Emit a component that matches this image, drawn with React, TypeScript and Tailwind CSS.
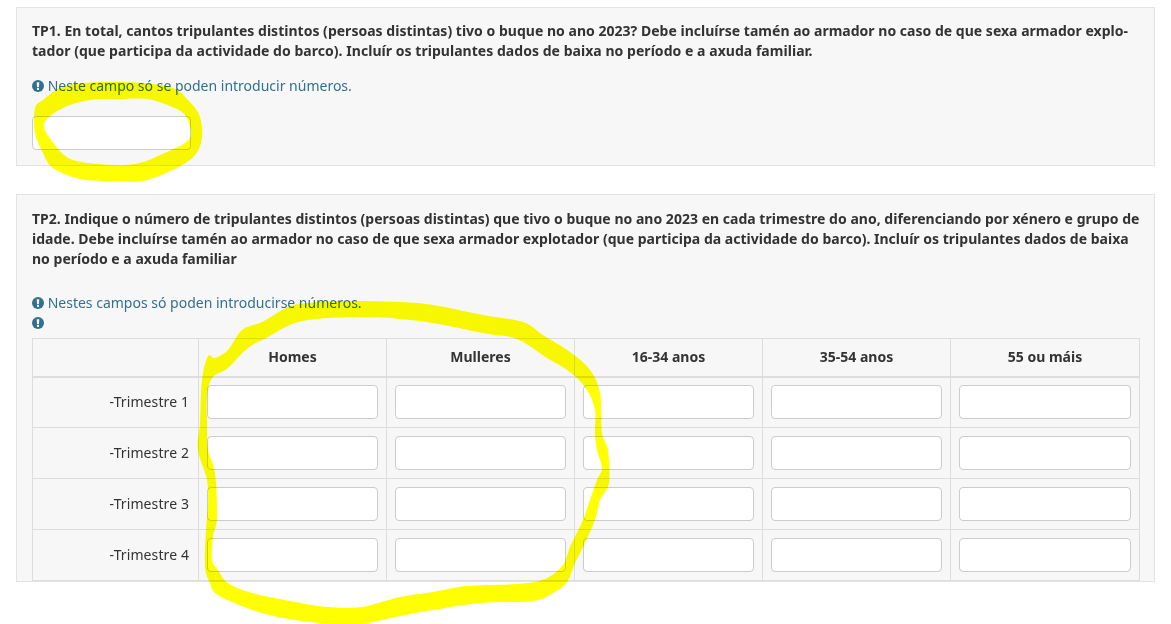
type Pt = [number, number];

const smooth = (p: Pt[]) => {
  const n = p.length;
  let d = `M${p[0][0]} ${p[0][1]}`;
  for (let i = 0; i < n; i++) {
    const a = p[(i - 1 + n) % n];
    const b = p[i];
    const c = p[(i + 1) % n];
    const e = p[(i + 2) % n];
    d += `C${b[0] + (c[0] - a[0]) / 6} ${b[1] + (c[1] - a[1]) / 6} ${c[0] - (e[0] - b[0]) / 6} ${c[1] - (e[1] - b[1]) / 6} ${c[0]} ${c[1]}`;
  }
  return d + "Z";
};

const smallOuter: Pt[] = [[35,108],[43,100],[60,88],[83,83],[113,82],[143,83],[173,88],[188,100],[200,117],[201,143],[187,162],[147,180],[113,181],[80,179],[53,168],[43,153],[35,133]];
const smallInner: Pt[] = [[44,124],[63,108],[90,100],[117,99],[147,99],[170,106],[185,115],[191,133],[185,143],[160,155],[140,163],[113,165],[73,160],[55,145]];
const bigOuter: Pt[] = [[198,450],[200,423],[202,380],[208,356],[215,358],[228,350],[242,330],[262,322],[288,307],[308,303],[345,301],[400,302],[433,305],[483,315],[523,322],[543,335],[570,352],[590,370],[600,393],[602,433],[608,450],[609,483],[600,500],[595,520],[583,547],[575,563],[567,582],[553,593],[533,601],[480,603],[433,610],[400,616],[362,624],[335,624],[295,620],[262,613],[232,602],[215,593],[210,583],[205,567],[206,530],[208,507],[207,480]];
const bigInner: Pt[] = [[208,450],[207,423],[207,397],[212,378],[228,368],[248,348],[268,337],[295,323],[328,318],[375,317],[400,319],[433,323],[483,333],[517,339],[547,358],[570,372],[587,390],[595,410],[595,433],[597,450],[602,468],[597,480],[590,500],[583,520],[570,547],[563,565],[545,579],[517,584],[467,586],[433,592],[400,597],[362,607],[328,607],[295,602],[252,593],[228,583],[218,570],[212,560],[213,537],[217,517],[215,473]];

const Info = () => (
  <svg width="12" height="12" viewBox="0 0 12 12" className="inline-block align-[-1px]">
    <circle cx="6" cy="6" r="6" fill="#31708f" />
    <path d="M4.7 2.2h2.6l-.35 5H5.05z" fill="#f7f7f7" />
    <rect x="5" y="8" width="2" height="2" fill="#f7f7f7" />
  </svg>
);

const columns = ["Homes", "Mulleres", "16-34 anos", "35-54 anos", "55 ou máis"];
const rows = ["-Trimestre 1", "-Trimestre 2", "-Trimestre 3", "-Trimestre 4"];

export default function App() {
  return (
    <div className="relative h-[624px] overflow-hidden bg-white pt-[7px] px-4 text-[14px] leading-[20px] text-[#333333] font-['Noto_Sans','Open_Sans',sans-serif]">
      <div className="h-[159px] border border-[#e3e3e3] bg-[#f7f7f7] pt-[13px] px-[15px]">
        <p className="font-bold whitespace-nowrap">
          <span className="tracking-[0.017px]">TP1. En total, cantos tripulantes distintos (persoas distintas) tivo o buque no ano 2023? Debe incluírse tamén ao armador no caso de que sexa armador explo-</span>
          <br />
          <span className="tracking-[0.04px]">tador (que participa da actividade do barco). Incluír os tripulantes dados de baixa no período e a axuda familiar.</span>
        </p>
        <p className="mt-[15px] text-[#31708f]">
          <Info /> Neste campo só se poden introducir números.
        </p>
        <input className="mt-[20px] block h-[34px] w-[159px] rounded-[4px] border border-[#cccccc] bg-white" />
      </div>
      <div className="mt-[28px] h-[388px] border border-[#e3e3e3] bg-[#f7f7f7] pt-[14px] px-[15px]">
        <p className="font-bold whitespace-nowrap tracking-[0.016px]">
          TP2. Indique o número de tripulantes distintos (persoas distintas) que tivo o buque no ano 2023 en cada trimestre do ano, diferenciando por xénero e grupo de
          <br />
          idade. Debe incluírse tamén ao armador no caso de que sexa armador explotador (que participa da actividade do barco). Incluír os tripulantes dados de baixa
          <br />
          no período e a axuda familiar
        </p>
        <p className="mt-[24px] text-[#31708f]">
          <Info /> Nestes campos só poden introducirse números.
        </p>
        <p className="text-[#31708f] h-[25px]">
          <Info />
        </p>
        <table className="w-[1107px] table-fixed border-collapse">
          <colgroup>
            <col className="w-[166px]" />
            <col className="w-[188px]" />
            <col className="w-[188px]" />
            <col className="w-[188px]" />
            <col className="w-[188px]" />
            <col className="w-[189px]" />
          </colgroup>
          <thead>
            <tr className="h-[38px]">
              <th className="border border-b-2 border-[#dddddd]" />
              {columns.map((c) => (
                <th key={c} className="border border-b-2 border-[#dddddd] text-center font-bold">
                  {c}
                </th>
              ))}
            </tr>
          </thead>
          <tbody>
            {rows.map((r) => (
              <tr key={r} className="h-[51px]">
                <td className="border border-[#dddddd] pr-[9px] text-right tracking-[0.1px]">{r}</td>
                {columns.map((c) => (
                  <td key={c} className="border border-[#dddddd] px-2">
                    <input className="block h-[34px] w-full rounded-[4px] border border-[#cccccc] bg-white" />
                  </td>
                ))}
              </tr>
            ))}
          </tbody>
        </table>
      </div>
      <svg className="absolute left-0 top-0 pointer-events-none mix-blend-multiply" width="1171" height="624" fill="#ffff00" fillRule="evenodd">
        <path d={smooth(smallOuter) + smooth(smallInner)} />
        <path d={smooth(bigOuter) + smooth(bigInner)} />
      </svg>
    </div>
  );
}
